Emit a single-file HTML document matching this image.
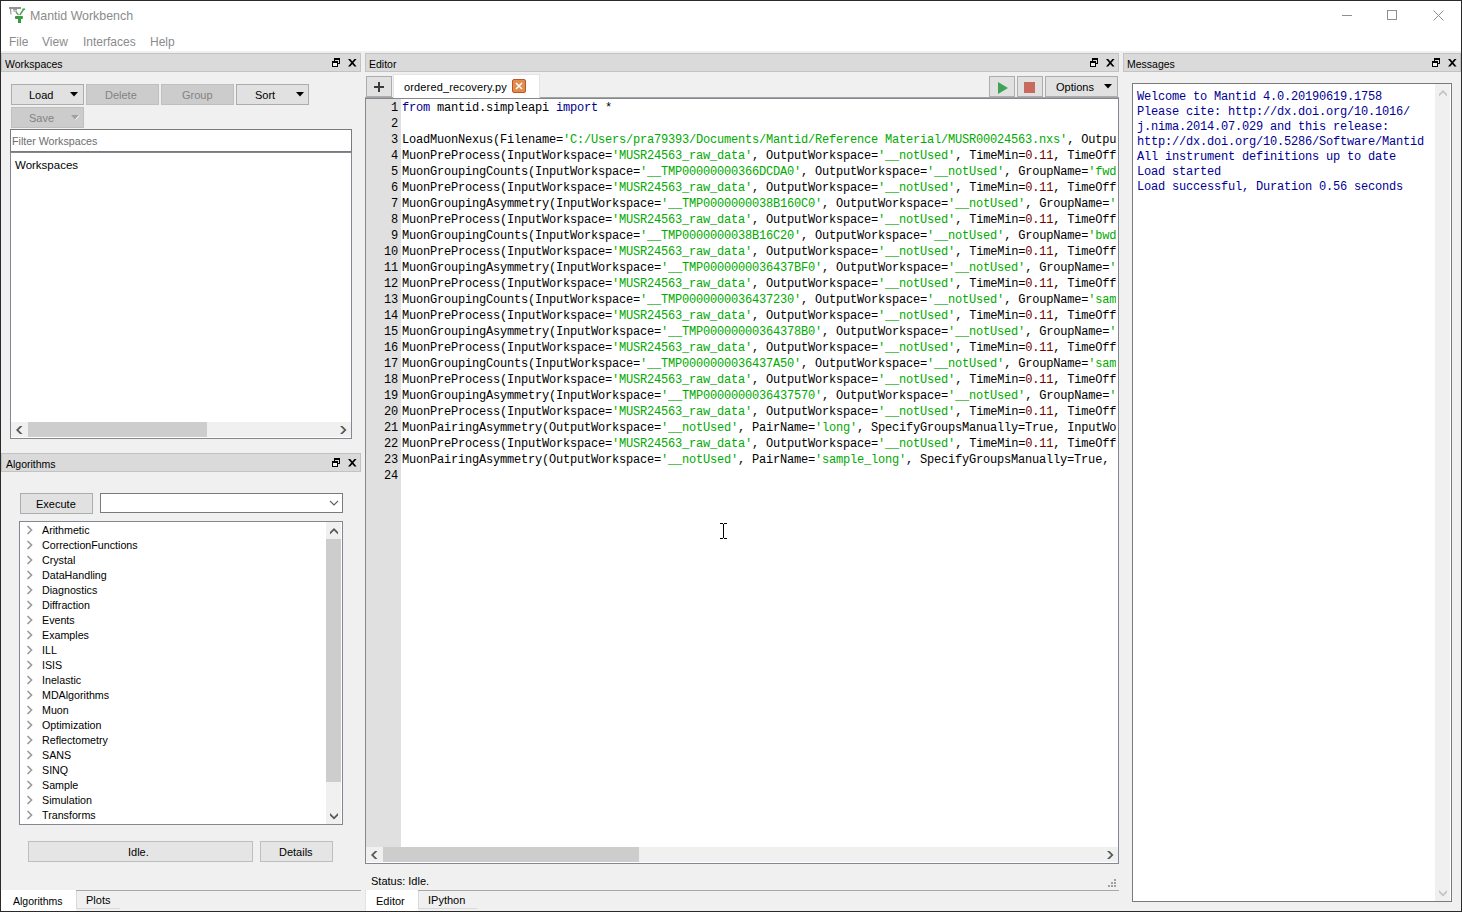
<!DOCTYPE html>
<html><head><meta charset="utf-8">
<style>
*{margin:0;padding:0;box-sizing:border-box}
html,body{width:1462px;height:912px;overflow:hidden;background:#f0f0f0;position:relative;font-family:"Liberation Sans",sans-serif;font-size:11px;color:#000}
.a{position:absolute}
.t{position:absolute;white-space:pre;line-height:13px;font-size:11px}
.dt{position:absolute;background:#dadada;border:1px solid #c3c3c3}
.btn{position:absolute;background:#e1e1e1;border:1px solid #adadad}
.dis{position:absolute;background:#cccccc;border:1px solid #bfbfbf}
.mono{font-family:"Liberation Mono",monospace}
.code{position:absolute;left:402px;white-space:pre;font-family:"Liberation Mono",monospace;font-size:12px;letter-spacing:-0.2px;line-height:16px;color:#000}
.ln{position:absolute;width:32px;text-align:right;left:366px;font-family:"Liberation Mono",monospace;font-size:12px;letter-spacing:-0.2px;line-height:16px;color:#000}
.s{color:#00aa00}.k{color:#00008b}.n{color:#700000}
.msg{position:absolute;left:1137px;white-space:pre;font-family:"Liberation Mono",monospace;font-size:12px;letter-spacing:-0.2px;line-height:15px;color:#000094}
.alg{position:absolute;left:42px;white-space:pre;font-size:10.7px;line-height:15px}
</style></head><body>
<!-- window frame -->
<div class="a" style="left:0;top:0;width:1462px;height:31px;background:#fff"></div>
<div class="a" style="left:0;top:31px;width:1462px;height:20px;background:#fff"></div>
<!-- title icon -->
<svg class="a" style="left:0;top:0" width="30" height="30" viewBox="0 0 30 30">
<rect x="9" y="7" width="12" height="2" fill="#939393"/>
<path d="M10.5 9 L11 14.5" stroke="#9a9a9a" stroke-width="1.2" fill="none"/>
<rect x="13" y="9" width="4" height="1.3" fill="#9a9a9a"/>
<path d="M13.5 11.2 H17" stroke="#7aa87a" stroke-width="1" fill="none"/>
<path d="M16 12 L18.5 15" stroke="#5aa05a" stroke-width="1.3" fill="none"/>
<path d="M23.5 9.5 L19.8 15" stroke="#4c9f4c" stroke-width="1.4" fill="none"/>
<rect x="22.5" y="8.5" width="2.5" height="1.5" fill="#2fae3a"/>
<rect x="15" y="16" width="8" height="3" rx="1" fill="#3c9a45"/>
<rect x="15.5" y="16.5" width="2" height="2" fill="#5c7a5c"/>
<rect x="18" y="19" width="3" height="4" fill="#2f9f3f"/>
</svg>
<div class="t" style="left:30px;top:10px;font-size:12.4px;color:#8b8b8b">Mantid Workbench</div>
<!-- window buttons -->
<div class="a" style="left:1342px;top:15px;width:10px;height:1px;background:#8f8f8f"></div>
<div class="a" style="left:1387px;top:10px;width:10px;height:10px;border:1px solid #8f8f8f"></div>
<svg class="a" style="left:1433px;top:10px" width="12" height="12" viewBox="0 0 12 12"><path d="M0.5 0.5 L10.5 10.5 M10.5 0.5 L0.5 10.5" stroke="#8f8f8f" stroke-width="1"/></svg>
<!-- menu -->
<div class="t" style="left:9px;top:36px;font-size:12px;color:#8b8b8b">File</div>
<div class="t" style="left:42px;top:36px;font-size:12px;color:#8b8b8b">View</div>
<div class="t" style="left:83px;top:36px;font-size:12px;color:#8b8b8b">Interfaces</div>
<div class="t" style="left:150px;top:36px;font-size:12px;color:#8b8b8b">Help</div>
<!-- frame borders -->
<div class="a" style="left:0;top:0;width:1462px;height:1px;background:#2a2a2a"></div>
<div class="a" style="left:0;top:0;width:1px;height:912px;background:#2a2a2a"></div>
<div class="a" style="left:1461px;top:0;width:1px;height:912px;background:#2a2a2a"></div>
<div class="a" style="left:0;top:911px;width:1462px;height:1px;background:#2a2a2a"></div>
<!-- dock titles -->
<div class="dt" style="left:1px;top:53px;width:360px;height:19px"></div>
<div class="t" style="left:5px;top:58px;font-size:10.5px">Workspaces</div>
<div class="dt" style="left:1px;top:453px;width:360px;height:19px"></div>
<div class="t" style="left:6px;top:458px;font-size:10.5px">Algorithms</div>
<div class="dt" style="left:365px;top:53px;width:754px;height:19px"></div>
<div class="t" style="left:369px;top:58px;font-size:10.5px">Editor</div>
<div class="dt" style="left:1123px;top:53px;width:338px;height:19px"></div>
<div class="t" style="left:1127px;top:58px;font-size:10.5px">Messages</div>
<svg class="a" style="left:332px;top:58px" width="26" height="10"><rect x="2" y="0" width="6" height="2" fill="#000"/>
<rect x="7" y="0" width="1" height="6" fill="#000"/>
<rect x="2" y="0" width="1" height="3" fill="#000"/>
<rect x="5" y="5" width="3" height="1" fill="#000"/>
<rect x="0" y="3" width="6" height="2" fill="#000"/>
<rect x="0" y="3" width="1" height="6" fill="#000"/>
<rect x="5" y="3" width="1" height="6" fill="#000"/>
<rect x="0" y="8" width="6" height="1" fill="#000"/>
<rect x="1" y="5" width="4" height="3" fill="#f2f2f2"/>
<path d="M16 1 H18.2 L24.6 8.6 H22.4 Z M22.4 1 H24.6 L18.2 8.6 H16 Z" fill="#000"/></svg>
<svg class="a" style="left:332px;top:458px" width="26" height="10"><rect x="2" y="0" width="6" height="2" fill="#000"/>
<rect x="7" y="0" width="1" height="6" fill="#000"/>
<rect x="2" y="0" width="1" height="3" fill="#000"/>
<rect x="5" y="5" width="3" height="1" fill="#000"/>
<rect x="0" y="3" width="6" height="2" fill="#000"/>
<rect x="0" y="3" width="1" height="6" fill="#000"/>
<rect x="5" y="3" width="1" height="6" fill="#000"/>
<rect x="0" y="8" width="6" height="1" fill="#000"/>
<rect x="1" y="5" width="4" height="3" fill="#f2f2f2"/>
<path d="M16 1 H18.2 L24.6 8.6 H22.4 Z M22.4 1 H24.6 L18.2 8.6 H16 Z" fill="#000"/></svg>
<svg class="a" style="left:1090px;top:58px" width="26" height="10"><rect x="2" y="0" width="6" height="2" fill="#000"/>
<rect x="7" y="0" width="1" height="6" fill="#000"/>
<rect x="2" y="0" width="1" height="3" fill="#000"/>
<rect x="5" y="5" width="3" height="1" fill="#000"/>
<rect x="0" y="3" width="6" height="2" fill="#000"/>
<rect x="0" y="3" width="1" height="6" fill="#000"/>
<rect x="5" y="3" width="1" height="6" fill="#000"/>
<rect x="0" y="8" width="6" height="1" fill="#000"/>
<rect x="1" y="5" width="4" height="3" fill="#f2f2f2"/>
<path d="M16 1 H18.2 L24.6 8.6 H22.4 Z M22.4 1 H24.6 L18.2 8.6 H16 Z" fill="#000"/></svg>
<svg class="a" style="left:1432px;top:58px" width="26" height="10"><rect x="2" y="0" width="6" height="2" fill="#000"/>
<rect x="7" y="0" width="1" height="6" fill="#000"/>
<rect x="2" y="0" width="1" height="3" fill="#000"/>
<rect x="5" y="5" width="3" height="1" fill="#000"/>
<rect x="0" y="3" width="6" height="2" fill="#000"/>
<rect x="0" y="3" width="1" height="6" fill="#000"/>
<rect x="5" y="3" width="1" height="6" fill="#000"/>
<rect x="0" y="8" width="6" height="1" fill="#000"/>
<rect x="1" y="5" width="4" height="3" fill="#f2f2f2"/>
<path d="M16 1 H18.2 L24.6 8.6 H22.4 Z M22.4 1 H24.6 L18.2 8.6 H16 Z" fill="#000"/></svg>
<!-- workspaces panel -->
<div class="btn" style="left:11px;top:84px;width:73px;height:21px"></div>
<div class="t" style="left:29px;top:89px">Load</div>
<svg class="a" style="left:70px;top:92px" width="9" height="5"><path d="M0 0 H8 L4 4.5 Z" fill="#000"/></svg>
<div class="dis" style="left:86px;top:84px;width:73px;height:21px"></div>
<div class="t" style="left:105px;top:89px;color:#838383">Delete</div>
<div class="dis" style="left:161px;top:84px;width:73px;height:21px"></div>
<div class="t" style="left:182px;top:89px;color:#838383">Group</div>
<div class="btn" style="left:236px;top:84px;width:73px;height:21px"></div>
<div class="t" style="left:255px;top:89px">Sort</div>
<svg class="a" style="left:296px;top:92px" width="9" height="5"><path d="M0 0 H8 L4 4.5 Z" fill="#000"/></svg>
<div class="dis" style="left:11px;top:107px;width:73px;height:21px"></div>
<div class="t" style="left:29px;top:112px;color:#838383">Save</div>
<svg class="a" style="left:71px;top:115px" width="9" height="5"><path d="M0 0 H8 L4 4.5 Z" fill="#a0a0a0"/><path d="M4.5 4.5 L8 0.5" stroke="#fff" stroke-width="1"/></svg>
<!-- filter -->
<div class="a" style="left:10px;top:129px;width:342px;height:23px;background:#fff;border:1px solid #7a7a7a"></div>
<div class="t" style="left:12px;top:135px;font-size:10.7px;color:#6e6e6e">Filter Workspaces</div>
<!-- tree -->
<div class="a" style="left:10px;top:152px;width:342px;height:287px;background:#fff;border:1px solid #828790"></div>
<div class="t" style="left:15px;top:159px;font-size:11.5px">Workspaces</div>
<div class="a" style="left:11px;top:422px;width:340px;height:15px;background:#f0f0f0"></div>
<div class="a" style="left:28px;top:422px;width:179px;height:15px;background:#cdcdcd"></div>
<svg class="a" style="left:16px;top:426px" width="8" height="9"><path d="M4 0 H6.5 L2.5 4 L6.5 8 H4 L0 4 Z" fill="#555a55"/></svg>
<svg class="a" style="left:340px;top:426px" width="8" height="9"><path d="M0 0 H2.5 L6.5 4 L2.5 8 H0 L4 4 Z" fill="#555a55"/></svg>
<!-- algorithms panel -->
<div class="btn" style="left:20px;top:493px;width:73px;height:21px"></div>
<div class="t" style="left:36px;top:498px">Execute</div>
<div class="a" style="left:100px;top:493px;width:243px;height:20px;background:#fff;border:1px solid #7a7a7a"></div>
<svg class="a" style="left:329px;top:500px" width="11" height="8"><path d="M1 1 L5 5 L9 1" stroke="#606060" stroke-width="1.1" fill="none"/></svg>
<div class="a" style="left:19px;top:521px;width:324px;height:304px;background:#fff;border:1px solid #828790"></div>
<div class="a" style="left:326px;top:522px;width:15px;height:302px;background:#f0f0f0"></div>
<div class="a" style="left:326px;top:539px;width:15px;height:243px;background:#cdcdcd"></div>
<svg class="a" style="left:330px;top:528px" width="9" height="8"><path d="M4 0 L8 4 V6.5 L4 2.5 L0 6.5 V4 Z" fill="#555a55"/></svg>
<svg class="a" style="left:330px;top:813px" width="9" height="8"><path d="M0 0 V2.5 L4 6.5 L8 2.5 V0 L4 4 Z" fill="#555a55"/></svg>
<div class="alg" style="top:523px">Arithmetic</div>
<svg class="a" style="left:26px;top:525px" width="8" height="10"><path d="M1.5 1 L5.5 5 L1.5 9" stroke="#9c9c9c" stroke-width="1.7" fill="none"/></svg>
<div class="alg" style="top:538px">CorrectionFunctions</div>
<svg class="a" style="left:26px;top:540px" width="8" height="10"><path d="M1.5 1 L5.5 5 L1.5 9" stroke="#9c9c9c" stroke-width="1.7" fill="none"/></svg>
<div class="alg" style="top:553px">Crystal</div>
<svg class="a" style="left:26px;top:555px" width="8" height="10"><path d="M1.5 1 L5.5 5 L1.5 9" stroke="#9c9c9c" stroke-width="1.7" fill="none"/></svg>
<div class="alg" style="top:568px">DataHandling</div>
<svg class="a" style="left:26px;top:570px" width="8" height="10"><path d="M1.5 1 L5.5 5 L1.5 9" stroke="#9c9c9c" stroke-width="1.7" fill="none"/></svg>
<div class="alg" style="top:583px">Diagnostics</div>
<svg class="a" style="left:26px;top:585px" width="8" height="10"><path d="M1.5 1 L5.5 5 L1.5 9" stroke="#9c9c9c" stroke-width="1.7" fill="none"/></svg>
<div class="alg" style="top:598px">Diffraction</div>
<svg class="a" style="left:26px;top:600px" width="8" height="10"><path d="M1.5 1 L5.5 5 L1.5 9" stroke="#9c9c9c" stroke-width="1.7" fill="none"/></svg>
<div class="alg" style="top:613px">Events</div>
<svg class="a" style="left:26px;top:615px" width="8" height="10"><path d="M1.5 1 L5.5 5 L1.5 9" stroke="#9c9c9c" stroke-width="1.7" fill="none"/></svg>
<div class="alg" style="top:628px">Examples</div>
<svg class="a" style="left:26px;top:630px" width="8" height="10"><path d="M1.5 1 L5.5 5 L1.5 9" stroke="#9c9c9c" stroke-width="1.7" fill="none"/></svg>
<div class="alg" style="top:643px">ILL</div>
<svg class="a" style="left:26px;top:645px" width="8" height="10"><path d="M1.5 1 L5.5 5 L1.5 9" stroke="#9c9c9c" stroke-width="1.7" fill="none"/></svg>
<div class="alg" style="top:658px">ISIS</div>
<svg class="a" style="left:26px;top:660px" width="8" height="10"><path d="M1.5 1 L5.5 5 L1.5 9" stroke="#9c9c9c" stroke-width="1.7" fill="none"/></svg>
<div class="alg" style="top:673px">Inelastic</div>
<svg class="a" style="left:26px;top:675px" width="8" height="10"><path d="M1.5 1 L5.5 5 L1.5 9" stroke="#9c9c9c" stroke-width="1.7" fill="none"/></svg>
<div class="alg" style="top:688px">MDAlgorithms</div>
<svg class="a" style="left:26px;top:690px" width="8" height="10"><path d="M1.5 1 L5.5 5 L1.5 9" stroke="#9c9c9c" stroke-width="1.7" fill="none"/></svg>
<div class="alg" style="top:703px">Muon</div>
<svg class="a" style="left:26px;top:705px" width="8" height="10"><path d="M1.5 1 L5.5 5 L1.5 9" stroke="#9c9c9c" stroke-width="1.7" fill="none"/></svg>
<div class="alg" style="top:718px">Optimization</div>
<svg class="a" style="left:26px;top:720px" width="8" height="10"><path d="M1.5 1 L5.5 5 L1.5 9" stroke="#9c9c9c" stroke-width="1.7" fill="none"/></svg>
<div class="alg" style="top:733px">Reflectometry</div>
<svg class="a" style="left:26px;top:735px" width="8" height="10"><path d="M1.5 1 L5.5 5 L1.5 9" stroke="#9c9c9c" stroke-width="1.7" fill="none"/></svg>
<div class="alg" style="top:748px">SANS</div>
<svg class="a" style="left:26px;top:750px" width="8" height="10"><path d="M1.5 1 L5.5 5 L1.5 9" stroke="#9c9c9c" stroke-width="1.7" fill="none"/></svg>
<div class="alg" style="top:763px">SINQ</div>
<svg class="a" style="left:26px;top:765px" width="8" height="10"><path d="M1.5 1 L5.5 5 L1.5 9" stroke="#9c9c9c" stroke-width="1.7" fill="none"/></svg>
<div class="alg" style="top:778px">Sample</div>
<svg class="a" style="left:26px;top:780px" width="8" height="10"><path d="M1.5 1 L5.5 5 L1.5 9" stroke="#9c9c9c" stroke-width="1.7" fill="none"/></svg>
<div class="alg" style="top:793px">Simulation</div>
<svg class="a" style="left:26px;top:795px" width="8" height="10"><path d="M1.5 1 L5.5 5 L1.5 9" stroke="#9c9c9c" stroke-width="1.7" fill="none"/></svg>
<div class="alg" style="top:808px">Transforms</div>
<svg class="a" style="left:26px;top:810px" width="8" height="10"><path d="M1.5 1 L5.5 5 L1.5 9" stroke="#9c9c9c" stroke-width="1.7" fill="none"/></svg>
<div class="a" style="left:28px;top:841px;width:225px;height:21px;background:#e5e5e5;border:1px solid #bdbfbd"></div>
<div class="t" style="left:128px;top:846px">Idle.</div>
<div class="a" style="left:260px;top:841px;width:73px;height:21px;background:#e5e5e5;border:1px solid #bdbfbd"></div>
<div class="t" style="left:279px;top:846px">Details</div>
<!-- bottom tabs left -->
<div class="a" style="left:76px;top:890px;width:285px;height:1px;background:#a8a8a8"></div>
<div class="a" style="left:1px;top:890px;width:75px;height:21px;background:#fff"></div>
<div class="a" style="left:76px;top:891px;width:44px;height:18px;border-left:1px solid #d9d9d9;border-bottom:1px solid #d9d9d9"></div>
<div class="t" style="left:13px;top:895px;font-size:10.5px">Algorithms</div>
<div class="t" style="left:86px;top:894px">Plots</div>
<!-- editor panel -->
<div class="btn" style="left:366px;top:76px;width:26px;height:21px"></div>
<div class="a" style="left:374px;top:86px;width:10px;height:2px;background:#3a3a3a"></div>
<div class="a" style="left:378px;top:82px;width:2px;height:10px;background:#3a3a3a"></div>
<div class="a" style="left:365px;top:97px;width:754px;height:1px;background:#a3a3a3"></div>
<div class="a" style="left:393px;top:74px;width:147px;height:25px;background:#fff;border:1px solid #e3e3e3;border-bottom:none"></div>
<div class="t" style="left:404px;top:81px;letter-spacing:0.15px">ordered_recovery.py</div>
<div class="a" style="left:512px;top:79px;width:14px;height:14px;background:#e38d4c;border:1px solid #b9572a;border-radius:2px"></div>
<svg class="a" style="left:512px;top:79px" width="14" height="14"><path d="M4 4 L10 10 M10 4 L4 10" stroke="#fff" stroke-width="1.5"/></svg>
<div class="btn" style="left:989px;top:76px;width:26px;height:21px"></div>
<svg class="a" style="left:997px;top:81px" width="12" height="14"><path d="M1 1 L11 7 L1 13 Z" fill="#40a257"/></svg>
<div class="btn" style="left:1017px;top:76px;width:26px;height:21px"></div>
<div class="a" style="left:1024px;top:82px;width:11px;height:11px;background:#c96a5e"></div>
<div class="btn" style="left:1045px;top:76px;width:73px;height:21px"></div>
<div class="t" style="left:1056px;top:81px">Options</div>
<svg class="a" style="left:1104px;top:84px" width="9" height="5"><path d="M0 0 H8 L4 4.5 Z" fill="#000"/></svg>
<!-- editor box -->
<div class="a" style="left:365px;top:98px;width:754px;height:766px;background:#fff;border:1px solid #828790"></div>
<div class="a" style="left:366px;top:99px;width:35px;height:748px;background:#e0e0e0"></div>
<div id="codearea" class="a" style="left:0;top:0;width:1116px;height:846px;overflow:hidden">
<div class="ln" style="top:100px">1<br>2<br>3<br>4<br>5<br>6<br>7<br>8<br>9<br>10<br>11<br>12<br>13<br>14<br>15<br>16<br>17<br>18<br>19<br>20<br>21<br>22<br>23<br>24</div>
<div class="code" style="top:100px"><span class="k">from</span> mantid.simpleapi <span class="k">import</span> *

LoadMuonNexus(Filename=<span class="s">'C:/Users/pra79393/Documents/Mantid/Reference Material/MUSR00024563.nxs'</span>, OutputWorkspace=<span class="s">'MUSR24563_raw_data'</span>)
MuonPreProcess(InputWorkspace=<span class="s">'MUSR24563_raw_data'</span>, OutputWorkspace=<span class="s">'__notUsed'</span>, TimeMin=<span class="n">0.11</span>, TimeOffset=<span class="n">0.0</span>)
MuonGroupingCounts(InputWorkspace=<span class="s">'__TMP00000000366DCDA0'</span>, OutputWorkspace=<span class="s">'__notUsed'</span>, GroupName=<span class="s">'fwd'</span>)
MuonPreProcess(InputWorkspace=<span class="s">'MUSR24563_raw_data'</span>, OutputWorkspace=<span class="s">'__notUsed'</span>, TimeMin=<span class="n">0.11</span>, TimeOffset=<span class="n">0.0</span>)
MuonGroupingAsymmetry(InputWorkspace=<span class="s">'__TMP0000000038B160C0'</span>, OutputWorkspace=<span class="s">'__notUsed'</span>, GroupName=<span class="s">'fwd'</span>)
MuonPreProcess(InputWorkspace=<span class="s">'MUSR24563_raw_data'</span>, OutputWorkspace=<span class="s">'__notUsed'</span>, TimeMin=<span class="n">0.11</span>, TimeOffset=<span class="n">0.0</span>)
MuonGroupingCounts(InputWorkspace=<span class="s">'__TMP0000000038B16C20'</span>, OutputWorkspace=<span class="s">'__notUsed'</span>, GroupName=<span class="s">'bwd'</span>)
MuonPreProcess(InputWorkspace=<span class="s">'MUSR24563_raw_data'</span>, OutputWorkspace=<span class="s">'__notUsed'</span>, TimeMin=<span class="n">0.11</span>, TimeOffset=<span class="n">0.0</span>)
MuonGroupingAsymmetry(InputWorkspace=<span class="s">'__TMP0000000036437BF0'</span>, OutputWorkspace=<span class="s">'__notUsed'</span>, GroupName=<span class="s">'bwd'</span>)
MuonPreProcess(InputWorkspace=<span class="s">'MUSR24563_raw_data'</span>, OutputWorkspace=<span class="s">'__notUsed'</span>, TimeMin=<span class="n">0.11</span>, TimeOffset=<span class="n">0.0</span>)
MuonGroupingCounts(InputWorkspace=<span class="s">'__TMP0000000036437230'</span>, OutputWorkspace=<span class="s">'__notUsed'</span>, GroupName=<span class="s">'sample'</span>)
MuonPreProcess(InputWorkspace=<span class="s">'MUSR24563_raw_data'</span>, OutputWorkspace=<span class="s">'__notUsed'</span>, TimeMin=<span class="n">0.11</span>, TimeOffset=<span class="n">0.0</span>)
MuonGroupingAsymmetry(InputWorkspace=<span class="s">'__TMP00000000364378B0'</span>, OutputWorkspace=<span class="s">'__notUsed'</span>, GroupName=<span class="s">'sample'</span>)
MuonPreProcess(InputWorkspace=<span class="s">'MUSR24563_raw_data'</span>, OutputWorkspace=<span class="s">'__notUsed'</span>, TimeMin=<span class="n">0.11</span>, TimeOffset=<span class="n">0.0</span>)
MuonGroupingCounts(InputWorkspace=<span class="s">'__TMP0000000036437A50'</span>, OutputWorkspace=<span class="s">'__notUsed'</span>, GroupName=<span class="s">'sample2'</span>)
MuonPreProcess(InputWorkspace=<span class="s">'MUSR24563_raw_data'</span>, OutputWorkspace=<span class="s">'__notUsed'</span>, TimeMin=<span class="n">0.11</span>, TimeOffset=<span class="n">0.0</span>)
MuonGroupingAsymmetry(InputWorkspace=<span class="s">'__TMP0000000036437570'</span>, OutputWorkspace=<span class="s">'__notUsed'</span>, GroupName=<span class="s">'sample2'</span>)
MuonPreProcess(InputWorkspace=<span class="s">'MUSR24563_raw_data'</span>, OutputWorkspace=<span class="s">'__notUsed'</span>, TimeMin=<span class="n">0.11</span>, TimeOffset=<span class="n">0.0</span>)
MuonPairingAsymmetry(OutputWorkspace=<span class="s">'__notUsed'</span>, PairName=<span class="s">'long'</span>, SpecifyGroupsManually=True, InputWorkspace1=<span class="s">'a'</span>)
MuonPreProcess(InputWorkspace=<span class="s">'MUSR24563_raw_data'</span>, OutputWorkspace=<span class="s">'__notUsed'</span>, TimeMin=<span class="n">0.11</span>, TimeOffset=<span class="n">0.0</span>)
MuonPairingAsymmetry(OutputWorkspace=<span class="s">'__notUsed'</span>, PairName=<span class="s">'sample_long'</span>, SpecifyGroupsManually=True, InputWorkspace1=<span class="s">'a'</span>)
</div>
</div>
<div class="a" style="left:366px;top:847px;width:752px;height:15px;background:#f0f0f0"></div>
<div class="a" style="left:383px;top:847px;width:256px;height:15px;background:#cdcdcd"></div>
<svg class="a" style="left:371px;top:851px" width="8" height="9"><path d="M4 0 H6.5 L2.5 4 L6.5 8 H4 L0 4 Z" fill="#555a55"/></svg>
<svg class="a" style="left:1107px;top:851px" width="8" height="9"><path d="M0 0 H2.5 L6.5 4 L2.5 8 H0 L4 4 Z" fill="#555a55"/></svg>
<!-- cursor -->
<div class="a" style="left:723px;top:524px;width:1px;height:14px;background:#000"></div>
<div class="a" style="left:720px;top:523px;width:3px;height:1px;background:#000"></div>
<div class="a" style="left:724px;top:523px;width:3px;height:1px;background:#000"></div>
<div class="a" style="left:720px;top:538px;width:3px;height:1px;background:#000"></div>
<div class="a" style="left:724px;top:538px;width:3px;height:1px;background:#000"></div>
<!-- status -->
<div class="t" style="left:371px;top:875px">Status: Idle.</div>
<svg class="a" style="left:1107px;top:879px" width="10" height="10"><g fill="#a0a0a0"><rect x="7" y="0" width="2" height="2"/><rect x="4" y="3" width="2" height="2"/><rect x="7" y="3" width="2" height="2"/><rect x="1" y="6" width="2" height="2"/><rect x="4" y="6" width="2" height="2"/><rect x="7" y="6" width="2" height="2"/></g></svg>
<!-- bottom tabs editor -->
<div class="a" style="left:365px;top:890px;width:754px;height:1px;background:#a8a8a8"></div>
<div class="a" style="left:365px;top:890px;width:53px;height:21px;background:#fff;border-left:1px solid #e3e3e3"></div>
<div class="a" style="left:418px;top:891px;width:59px;height:18px;border-left:1px solid #d9d9d9;border-bottom:1px solid #d9d9d9"></div>
<div class="t" style="left:376px;top:895px">Editor</div>
<div class="t" style="left:428px;top:894px">IPython</div>
<!-- messages -->
<div class="a" style="left:1132px;top:83px;width:320px;height:819px;background:#fff;border:1px solid #7a7a7a"></div>
<div class="a" style="left:1435px;top:84px;width:15px;height:817px;background:#f0f0f0"></div>
<svg class="a" style="left:1439px;top:90px" width="9" height="8"><path d="M4 0 L8 4 V6.5 L4 2.5 L0 6.5 V4 Z" fill="#c2c6c2"/></svg>
<svg class="a" style="left:1439px;top:890px" width="9" height="8"><path d="M0 0 V2.5 L4 6.5 L8 2.5 V0 L4 4 Z" fill="#c2c6c2"/></svg>
<div class="msg" style="top:90px">Welcome to Mantid 4.0.20190619.1758
Please cite: http://dx.doi.org/10.1016/
j.nima.2014.07.029 and this release:
http://dx.doi.org/10.5286/Software/Mantid
All instrument definitions up to date
Load started
Load successful, Duration 0.56 seconds</div>

</body></html>
